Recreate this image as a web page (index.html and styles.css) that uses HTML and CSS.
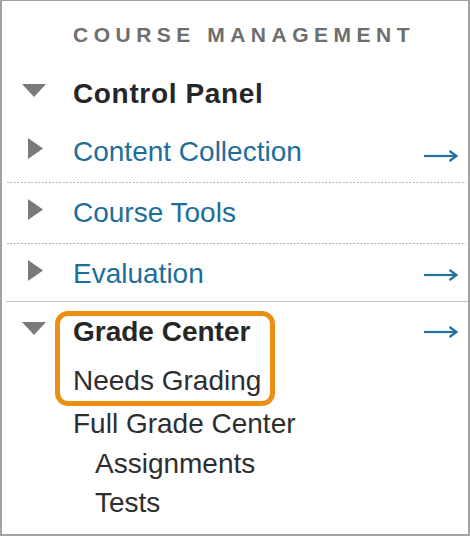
FILE: index.html
```html
<!DOCTYPE html>
<html lang="en">
<head>
<meta charset="utf-8">
<title>Course Management</title>
<link rel="stylesheet" href="styles.css">
</head>
<body>
<div class="panel">
  <div class="heading">COURSE MANAGEMENT</div>

  <div class="item item-top">
    <span class="toggle toggle-open"><svg class="tri-down" width="24" height="13" viewBox="0 0 24 13"><polygon points="0,0 24,0 12,13"/></svg></span>
    <span class="label label-strong label-wide">Control Panel</span>
  </div>

  <div class="item">
    <span class="toggle"><svg class="tri-right" width="15" height="21" viewBox="0 0 15 21"><polygon points="0,0 15,10.5 0,21"/></svg></span>
    <span class="label label-link">Content Collection</span>
    <svg class="arrow arrow-low" width="34" height="12" viewBox="0 0 34 12"><line x1="0" y1="6" x2="32" y2="6"/><polyline points="25.5,1 32.5,6 25.5,11"/></svg>
  </div>
  <div class="sep-dotted"></div>

  <div class="item">
    <span class="toggle"><svg class="tri-right" width="15" height="21" viewBox="0 0 15 21"><polygon points="0,0 15,10.5 0,21"/></svg></span>
    <span class="label label-link">Course Tools</span>
  </div>
  <div class="sep-dotted"></div>

  <div class="item item-last">
    <span class="toggle"><svg class="tri-right" width="15" height="21" viewBox="0 0 15 21"><polygon points="0,0 15,10.5 0,21"/></svg></span>
    <span class="label label-link">Evaluation</span>
    <svg class="arrow" width="34" height="12" viewBox="0 0 34 12"><line x1="0" y1="6" x2="32" y2="6"/><polyline points="25.5,1 32.5,6 25.5,11"/></svg>
  </div>
  <div class="sep-solid"></div>

  <div class="item item-grade">
    <span class="toggle toggle-open toggle-grade"><svg class="tri-down" width="24" height="13" viewBox="0 0 24 13"><polygon points="0,0 24,0 12,13"/></svg></span>
    <div class="highlight">
      <span class="label label-strong">Grade Center</span>
      <span class="label label-sub">Needs Grading</span>
    </div>
    <svg class="arrow arrow-grade" width="34" height="12" viewBox="0 0 34 12"><line x1="0" y1="6" x2="32" y2="6"/><polyline points="25.5,1 32.5,6 25.5,11"/></svg>
  </div>

  <ul class="sublist">
    <li class="subitem">Full Grade Center</li>
    <li class="subitem subitem-indent">Assignments</li>
    <li class="subitem subitem-indent">Tests</li>
  </ul>
</div>
</body>
</html>
```

FILE: styles.css
```css
* { box-sizing: border-box; }

html, body {
  margin: 0;
  padding: 0;
  background: #ffffff;
}

body {
  font-family: "Liberation Sans", Arial, Helvetica, sans-serif;
}

.panel {
  width: 470px;
  height: 536px;
  border-style: solid;
  border-color: #a3a3a3;
  border-width: 1px 2px 2px 2px;
  background: #ffffff;
  overflow: hidden;
}

.heading {
  padding: 22px 0 0 71px;
  margin-bottom: 17px;
  font-size: 21px;
  line-height: 24px;
  font-weight: bold;
  letter-spacing: 5.5px;
  color: #6e6e6e;
  white-space: nowrap;
}

.item {
  display: flex;
  align-items: flex-start;
  padding: 16px 10px 16px 20px;
}

.item-top { padding-bottom: 14px; }
.item-last { padding-bottom: 13px; }
.item-grade { padding-top: 9px; padding-bottom: 0; }

.toggle {
  width: 25px;
  flex: none;
  display: flex;
  justify-content: flex-start;
  margin-right: 26px;
  margin-top: 0;
  padding-left: 6px;
}

.toggle-open {
  padding-left: 0;
  margin-top: 4px;
}

.toggle-grade { margin-top: 11px; }

.tri-down { display: block; fill: #7a7a7a; }
.tri-right { display: block; fill: #7a7a7a; }

.label {
  font-size: 28px;
  line-height: 28px;
  white-space: nowrap;
}

.label-strong {
  font-weight: bold;
  color: #262626;
}

.label-wide { letter-spacing: 0.65px; }

.label-link { color: #1d6e9b; }

.label-sub {
  color: #2e2e2e;
  margin-top: 21px;
}

.arrow {
  display: block;
  flex: none;
  margin-left: auto;
  margin-top: 9px;
  fill: none;
  stroke: #22709c;
  stroke-width: 2.2;
}

.arrow-low { margin-top: 12px; }
.arrow-grade { margin-top: 15px; }

.sep-dotted {
  height: 1px;
  margin: 0 2px 0 5px;
  background-image: repeating-linear-gradient(to right, #b3b3b3 0 2px, transparent 2px 3.5px);
}

.sep-solid {
  height: 1px;
  margin: 0 0 0 4px;
  background: #c4c4c4;
}

.highlight {
  display: flex;
  flex-direction: column;
  margin-left: -18px;
  padding: 2px 9px 6px 13px;
  border: 5px solid #ea8f12;
  border-radius: 13px;
}

.sublist {
  list-style: none;
  margin: 4px 0 0 0;
  padding: 0 0 0 71px;
  display: flex;
  flex-direction: column;
  gap: 11.5px;
}

.subitem {
  font-size: 28px;
  line-height: 28px;
  color: #2e2e2e;
  white-space: nowrap;
}

.subitem-indent { padding-left: 22px; }
```
